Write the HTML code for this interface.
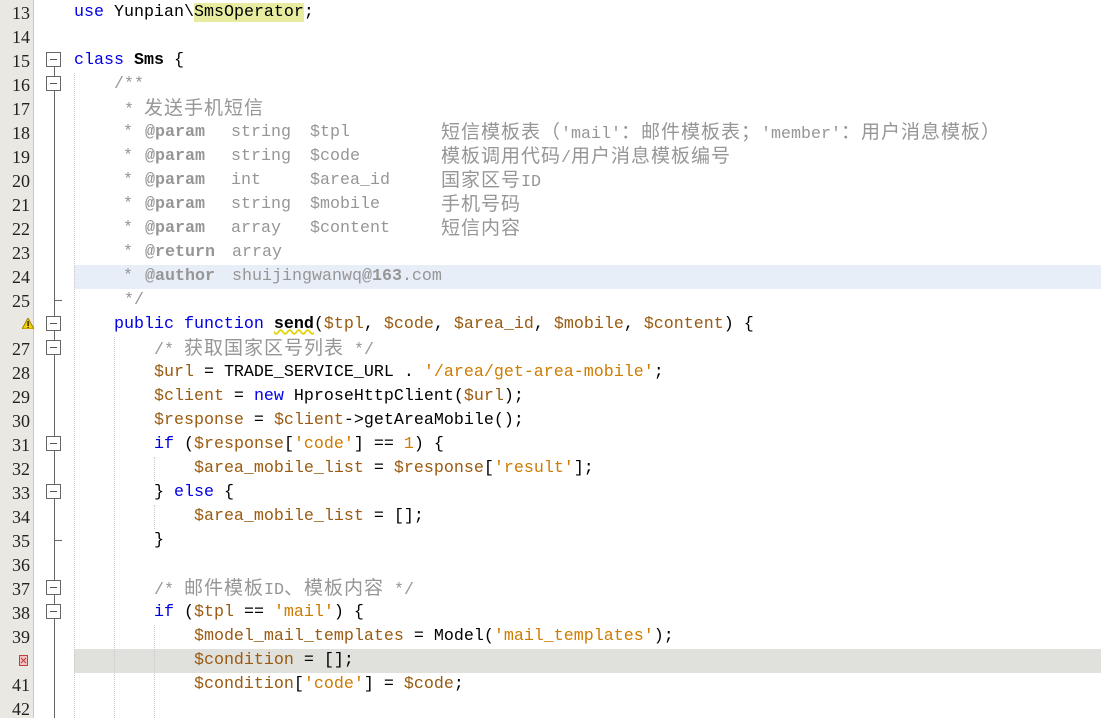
<!DOCTYPE html>
<html><head><meta charset="utf-8"><style>
body{margin:0;width:1101px;height:718px;overflow:hidden;background:#fff;position:relative;font-family:"Liberation Mono","Noto Sans CJK SC",monospace;font-size:16.67px;}
.g{position:absolute;left:0;top:0;width:33px;height:718px;background:#e9e8e3;border-right:1px solid #c8c8c4;}
.n{position:absolute;left:0;width:30px;text-align:right;font-size:18px;color:#222;line-height:24px;font-family:"Liberation Serif",serif;}
.l{position:absolute;left:74px;white-space:pre;line-height:24px;height:24px;color:#000;}
.a{position:absolute;white-space:pre;line-height:24px;color:#969696;}
.k{color:#0000e6}.v{color:#9a5a10}.s{color:#ce7b00}.c{color:#969696}.b{font-weight:bold}
.z{font-size:19px;font-family:"Noto Sans CJK SC",sans-serif;letter-spacing:1px;line-height:20px}
.box{position:absolute;left:46px;width:15px;height:15px;border:1px solid #666;background:#fff;box-sizing:border-box}
.box:after{content:"";position:absolute;left:3px;top:6px;width:7px;height:1px;background:#555}
.vl{position:absolute;left:54px;width:1px;background:#666}
.tk{position:absolute;left:54px;width:8px;height:1px;background:#666}
.ig{position:absolute;width:0;border-left:1px dotted #c8c8c8}
.hl{position:absolute;left:74px;right:0;height:24px}
</style></head><body>
<div class="g"></div>
<div class="hl" style="top:265px;background:#e8eef8"></div>
<div class="hl" style="top:649px;background:#e0e0dc"></div>
<div class="vl" style="top:66px;height:652px"></div>
<div class="ig" style="left:74px;top:73px;height:645px"></div>
<div class="ig" style="left:114px;top:337px;height:381px"></div>
<div class="ig" style="left:154px;top:457px;height:24px"></div>
<div class="ig" style="left:154px;top:505px;height:24px"></div>
<div class="ig" style="left:154px;top:625px;height:93px"></div>
<div class="box" style="top:52px"></div><div class="box" style="top:76px"></div>
<div class="tk" style="top:300px"></div>
<div class="box" style="top:316px"></div><div class="box" style="top:340px"></div>
<div class="box" style="top:436px"></div><div class="box" style="top:484px"></div>
<div class="tk" style="top:540px"></div>
<div class="box" style="top:580px"></div><div class="box" style="top:604px"></div>
<svg style="position:absolute;left:22px;top:318px" width="12" height="11"><polygon points="6,0 12,11 0,11" fill="#f0d000" stroke="#a08000" stroke-width="1"/><rect x="5.5" y="3" width="1.2" height="5" fill="#000"/><rect x="5.5" y="9" width="1.2" height="1" fill="#000"/></svg>
<svg style="position:absolute;left:19px;top:655px" width="9" height="11"><rect x="0.5" y="0.5" width="8" height="10" fill="#f4c0c0" stroke="#c04040"/><path d="M2 3l5 5M7 3l-5 5" stroke="#c04040"/></svg>
<div class="n" style="top:1px">13</div><div class="n" style="top:25px">14</div><div class="n" style="top:49px">15</div><div class="n" style="top:73px">16</div><div class="n" style="top:97px">17</div><div class="n" style="top:121px">18</div><div class="n" style="top:145px">19</div><div class="n" style="top:169px">20</div><div class="n" style="top:193px">21</div><div class="n" style="top:217px">22</div><div class="n" style="top:241px">23</div><div class="n" style="top:265px">24</div><div class="n" style="top:289px">25</div><div class="n" style="top:337px">27</div><div class="n" style="top:361px">28</div><div class="n" style="top:385px">29</div><div class="n" style="top:409px">30</div><div class="n" style="top:433px">31</div><div class="n" style="top:457px">32</div><div class="n" style="top:481px">33</div><div class="n" style="top:505px">34</div><div class="n" style="top:529px">35</div><div class="n" style="top:553px">36</div><div class="n" style="top:577px">37</div><div class="n" style="top:601px">38</div><div class="n" style="top:625px">39</div><div class="n" style="top:673px">41</div><div class="n" style="top:697px">42</div>
<div class="l" style="top:1px"><span class="k">use</span> Yunpian\<span style="background:#e8eca0">SmsOperator</span>;</div>
<div class="l" style="top:49px"><span class="k">class</span> <b>Sms</b> {</div>
<div class="l c" style="top:73px">    /**</div>
<div class="l c" style="top:97px">     * <span class="z">发送手机短信</span></div>
<div class="a" style="left:123px;top:121px">*</div><div class="a b" style="left:145px;top:121px">@param</div><div class="a" style="left:231px;top:121px">string</div><div class="a" style="left:310px;top:121px">$tpl</div><div class="a" style="left:441px;top:121px"><span class="z">短信模板表（</span>'mail'<span class="z">：邮件模板表；</span>'member'<span class="z">：用户消息模板）</span></div>
<div class="a" style="left:123px;top:145px">*</div><div class="a b" style="left:145px;top:145px">@param</div><div class="a" style="left:231px;top:145px">string</div><div class="a" style="left:310px;top:145px">$code</div><div class="a" style="left:441px;top:145px"><span class="z">模板调用代码</span>/<span class="z">用户消息模板编号</span></div>
<div class="a" style="left:123px;top:169px">*</div><div class="a b" style="left:145px;top:169px">@param</div><div class="a" style="left:231px;top:169px">int</div><div class="a" style="left:310px;top:169px">$area_id</div><div class="a" style="left:441px;top:169px"><span class="z">国家区号</span>ID</div>
<div class="a" style="left:123px;top:193px">*</div><div class="a b" style="left:145px;top:193px">@param</div><div class="a" style="left:231px;top:193px">string</div><div class="a" style="left:310px;top:193px">$mobile</div><div class="a" style="left:441px;top:193px"><span class="z">手机号码</span></div>
<div class="a" style="left:123px;top:217px">*</div><div class="a b" style="left:145px;top:217px">@param</div><div class="a" style="left:231px;top:217px">array</div><div class="a" style="left:310px;top:217px">$content</div><div class="a" style="left:441px;top:217px"><span class="z">短信内容</span></div>
<div class="a" style="left:123px;top:241px">*</div><div class="a b" style="left:145px;top:241px">@return</div><div class="a" style="left:232px;top:241px">array</div>
<div class="a" style="left:123px;top:265px">*</div><div class="a b" style="left:145px;top:265px">@author</div><div class="a" style="left:232px;top:265px">shuijingwanwq<b>@163</b>.com</div>
<div class="l c" style="top:289px">     */</div>
<div class="l" style="top:313px">    <span class="k">public function</span> <b style="text-decoration:underline wavy #e0d000">send</b>(<span class="v">$tpl</span>, <span class="v">$code</span>, <span class="v">$area_id</span>, <span class="v">$mobile</span>, <span class="v">$content</span>) {</div>
<div class="l c" style="top:337px">        /* <span class="z">获取国家区号列表</span> */</div>
<div class="l" style="top:361px">        <span class="v">$url</span> = TRADE_SERVICE_URL . <span class="s">'/area/get-area-mobile'</span>;</div>
<div class="l" style="top:385px">        <span class="v">$client</span> = <span class="k">new</span> HproseHttpClient(<span class="v">$url</span>);</div>
<div class="l" style="top:409px">        <span class="v">$response</span> = <span class="v">$client</span>-&gt;getAreaMobile();</div>
<div class="l" style="top:433px">        <span class="k">if</span> (<span class="v">$response</span>[<span class="s">'code'</span>] == <span class="s">1</span>) {</div>
<div class="l" style="top:457px">            <span class="v">$area_mobile_list</span> = <span class="v">$response</span>[<span class="s">'result'</span>];</div>
<div class="l" style="top:481px">        } <span class="k">else</span> {</div>
<div class="l" style="top:505px">            <span class="v">$area_mobile_list</span> = [];</div>
<div class="l" style="top:529px">        }</div>
<div class="l c" style="top:577px">        /* <span class="z">邮件模板</span>ID<span class="z">、模板内容</span> */</div>
<div class="l" style="top:601px">        <span class="k">if</span> (<span class="v">$tpl</span> == <span class="s">'mail'</span>) {</div>
<div class="l" style="top:625px">            <span class="v">$model_mail_templates</span> = Model(<span class="s">'mail_templates'</span>);</div>
<div class="l" style="top:649px">            <span class="v">$condition</span> = [];</div>
<div class="l" style="top:673px">            <span class="v">$condition</span>[<span class="s">'code'</span>] = <span class="v">$code</span>;</div>
</body></html>
